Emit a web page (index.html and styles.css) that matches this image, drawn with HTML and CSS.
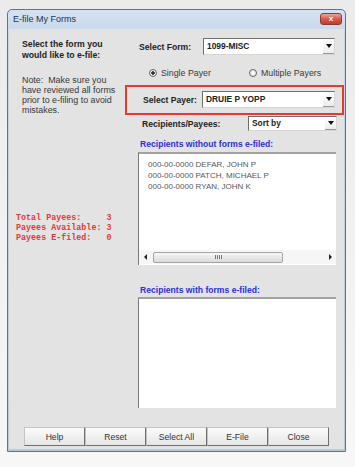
FILE: index.html
```html
<!DOCTYPE html>
<html lang="en">

<head>
    <meta charset="UTF-8">
    <meta name="viewport" content="width=device-width, initial-scale=1.0">
    <title>E-file My Forms</title>
    <link rel="stylesheet" href="styles.css">
</head>

<body>
    <div class="window">
        <div class="titlebar">
            <span class="title">E-file My Forms</span>
            <span class="close-btn">x</span>
        </div>
        <div class="client">
            <div class="main">
                <div class="left-col">
                    <p class="intro">Select the form you<br>would like to e-file:</p>
                    <p class="note">Note:&nbsp; Make sure you<br>have reviewed all forms<br>prior to e-filing to avoid<br>mistakes.</p>
<pre class="stats">Total Payees:     3
Payees Available: 3
Payees E-filed:   0</pre>
                </div>
                <div class="right-col">
                    <div class="form-row">
                        <span class="label form-label">Select Form:</span>
                        <div class="dropdown form-select">
                            <span class="value">1099-MISC</span>
                            <span class="arrow"></span>
                        </div>
                    </div>
                    <div class="radio-row">
                        <label class="radio-opt single"><span class="radio checked"></span>Single Payer</label>
                        <label class="radio-opt"><span class="radio"></span>Multiple Payers</label>
                    </div>
                    <div class="payer-box">
                        <span class="label payer-label">Select Payer:</span>
                        <div class="dropdown payer-select">
                            <span class="value">DRUIE P YOPP</span>
                            <span class="arrow"></span>
                        </div>
                    </div>
                    <div class="sort-row">
                        <span class="label sort-label">Recipients/Payees:</span>
                        <div class="dropdown sort-select">
                            <span class="value">Sort by</span>
                            <span class="arrow"></span>
                        </div>
                    </div>
                    <div class="list-head">Recipients without forms e-filed:</div>
                    <div class="list list-todo">
                        <div class="entries">
                            <div>000-00-0000 DEFAR, JOHN P</div>
                            <div>000-00-0000 PATCH, MICHAEL P</div>
                            <div>000-00-0000 RYAN, JOHN K</div>
                        </div>
                        <div class="hscroll">
                            <span class="arr arr-left"></span>
                            <span class="thumb"><span class="grip"></span></span>
                            <span class="track"></span>
                            <span class="arr arr-right"></span>
                        </div>
                    </div>
                    <div class="list-head done-head">Recipients with forms e-filed:</div>
                    <div class="list list-done"></div>
                </div>
            </div>
            <div class="buttons">
                <button class="btn">Help</button>
                <button class="btn">Reset</button>
                <button class="btn">Select All</button>
                <button class="btn">E-File</button>
                <button class="btn">Close</button>
            </div>
        </div>
    </div>
</body>

</html>
```

FILE: styles.css
```css
  /* Page and window frame */
  body {
      margin: 0;
      width: 355px;
      height: 467px;
      overflow: hidden;
      background: linear-gradient(#ebebeb, #f7f7f7);
      font-family: "Liberation Sans", Arial, sans-serif;
  }

  .window {
      margin: 9px 0 0 7px;
      width: 339px;
      height: 443px;
      box-sizing: border-box;
      border: 1px solid #66737f;
      border-radius: 5px 5px 0 0;
      background: linear-gradient(#d4e2f1, #c3d5e8 30px, #b4cad9);
      display: flex;
      flex-direction: column;
  }

  .titlebar {
      height: 19px;
      display: flex;
      justify-content: space-between;
      align-items: flex-start;
      padding: 0 3px 0 5px;
  }

  .title {
      font-size: 9px;
      line-height: 19px;
      color: #1d3352;
  }

  .close-btn {
      margin-top: 3px;
      width: 22px;
      height: 12px;
      box-sizing: border-box;
      border: 1px solid #8c3b33;
      border-radius: 3px;
      background: linear-gradient(#eaa89b, #d65a4e 50%, #c23b30);
      color: #fff;
      font: bold 8px/10px "Liberation Sans", Arial, sans-serif;
      text-align: center;
  }

  .client {
      flex: 1;
      margin: 0 1px 2px 1px;
      background: #e3e3e3;
      display: flex;
      flex-direction: column;
  }

  .main {
      flex: 1;
      display: flex;
  }

  /* Left column */
  .left-col {
      width: 129px;
  }

  .intro {
      margin: 10px 0 0 13px;
      font-size: 8.7px;
      font-weight: bold;
      line-height: 10.5px;
      color: #222;
  }

  .note {
      margin: 14.5px 0 0 13px;
      font-size: 8.9px;
      line-height: 10.3px;
      color: #383838;
  }

  .stats {
      margin: 97.5px 0 0 7px;
      font: bold 8.4px/10px "Liberation Mono", "Courier New", monospace;
      color: #e23a3a;
  }

  /* Right column */
  .right-col {
      flex: 1;
  }

  .label {
      font-size: 8.6px;
      font-weight: bold;
      color: #222;
  }

  .form-row {
      display: flex;
      align-items: center;
      margin-top: 9px;
      height: 17px;
  }

  .form-label {
      width: 64px;
      padding-left: 1px;
  }

  .dropdown {
      display: flex;
      box-sizing: border-box;
      background: #fff;
      border: 1px solid;
      border-color: #6f6f6f #d6d6d6 #d6d6d6 #6f6f6f;
  }

  .dropdown .value {
      flex: 1;
      padding-left: 3px;
      font-size: 8.4px;
      font-weight: bold;
      color: #222;
      line-height: 14px;
  }

  .dropdown .arrow {
      width: 11px;
      display: flex;
      align-items: center;
      justify-content: center;
      background: linear-gradient(#fff, #ececec);
      border-bottom: 1px solid #9a9a9a;
      box-sizing: border-box;
  }

  .dropdown .arrow::after {
      content: "";
      border-top: 4px solid #111;
      border-left: 3px solid transparent;
      border-right: 3px solid transparent;
  }

  .form-select,
  .payer-select {
      width: 132px;
      height: 17px;
  }

  .radio-row {
      display: flex;
      align-items: center;
      margin-top: 11px;
      height: 14px;
      padding-left: 11px;
  }

  .radio-opt {
      display: flex;
      align-items: center;
      gap: 4px;
      font-size: 8.8px;
      color: #3a3a3a;
  }

  .radio-opt.single {
      width: 100px;
  }

  .radio {
      width: 8px;
      height: 8px;
      box-sizing: border-box;
      border: 1px solid #666;
      border-radius: 50%;
      background: radial-gradient(#fff, #dcdcdc);
  }

  .radio.checked {
      background: radial-gradient(circle, #333 0 1.5px, #fff 2px, #dcdcdc);
  }

  .payer-box {
      margin: 5px 0 0 -13px;
      height: 30px;
      box-sizing: border-box;
      border: 2px solid #e8392d;
      display: flex;
      align-items: center;
      padding-left: 16px;
  }

  .payer-label {
      width: 59px;
  }

  .payer-select {
      width: 133px;
      margin-bottom: 2px;
  }

  .sort-row {
      display: flex;
      align-items: center;
      height: 15px;
      margin-top: 1px;
      padding-left: 4px;
  }

  .sort-label {
      width: 106px;
  }

  .sort-select {
      width: 89px;
      height: 15px;
  }

  .sort-select .value {
      line-height: 12px;
  }

  .list-head {
      margin: 8px 0 0 2px;
      font-size: 8.6px;
      font-weight: bold;
      line-height: 11px;
      color: #2e2ed8;
  }

  .done-head {
      margin-top: 20px;
  }

  .list {
      width: 198px;
      box-sizing: border-box;
      background: #fff;
      border-top: 2px solid #a2a2a2;
      border-left: 1px solid #7a7a7a;
  }

  .list-todo {
      margin-top: 2px;
      height: 113px;
      display: flex;
      flex-direction: column;
  }

  .list-done {
      margin-top: 1px;
      height: 111px;
  }

  .entries {
      flex: 1;
      padding: 4.5px 0 0 9px;
      font-size: 8px;
      line-height: 11px;
      color: #575757;
  }

  /* Horizontal scroll bar */
  .hscroll {
      height: 14px;
      margin-bottom: 1px;
      display: flex;
      align-items: center;
      background: #f6f6f6;
  }

  .arr {
      width: 12px;
      height: 14px;
      display: flex;
      align-items: center;
      justify-content: center;
  }

  .arr-left::after {
      content: "";
      border-right: 3px solid #222;
      border-top: 3px solid transparent;
      border-bottom: 3px solid transparent;
  }

  .arr-right::after {
      content: "";
      border-left: 3px solid #222;
      border-top: 3px solid transparent;
      border-bottom: 3px solid transparent;
  }

  .thumb {
      margin-left: 2px;
      width: 130px;
      height: 11px;
      box-sizing: border-box;
      border: 1px solid #a4a4a4;
      border-radius: 2px;
      background: linear-gradient(#f7f7f7, #dadada);
      display: flex;
      align-items: center;
      justify-content: center;
  }

  .grip {
      width: 7px;
      height: 4px;
      background: repeating-linear-gradient(90deg, #777 0 1px, transparent 1px 2px);
  }

  .track {
      flex: 1;
  }

  /* Bottom buttons */
  .buttons {
      display: flex;
      padding: 0 0 3px 15px;
  }

  .btn {
      width: 61px;
      height: 19px;
      box-sizing: border-box;
      margin: 0;
      padding: 0;
      border: 1px solid;
      border-color: #c4c4c4 #6e6e6e #6e6e6e #c4c4c4;
      background: linear-gradient(#fbfbfb, #e6e6e6);
      font-family: "Liberation Sans", Arial, sans-serif;
      font-size: 8.6px;
      color: #333;
  }
```
